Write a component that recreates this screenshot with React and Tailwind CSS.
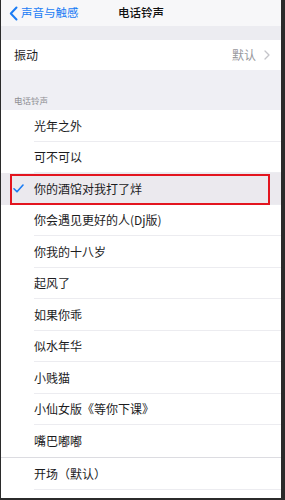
import { useState } from 'react'

const SONGS = [
  '光年之外',
  '可不可以',
  '你的酒馆对我打了烊',
  '你会遇见更好的人(Dj版)',
  '你我的十八岁',
  '起风了',
  '如果你乖',
  '似水年华',
  '小贱猫',
  '小仙女版《等你下课》',
  '嘴巴嘟嘟',
]

const FONT = { fontFamily: '"Noto Sans CJK SC", "Noto Sans", sans-serif' }

function Check() {
  return (
    <svg width="11" height="9" viewBox="0 0 11 9" fill="none">
      <path d="M1 4.8 L4 7.8 L10 1" stroke="#1a7cf5" strokeWidth="1.6" strokeLinecap="round" strokeLinejoin="round" />
    </svg>
  )
}

export default function App() {
  const [selected, setSelected] = useState(2)

  return (
    <div className="w-[285px] h-[500px] overflow-hidden bg-[#2b2b2b] flex" style={FONT}>
      <div className="ml-px w-[280px] h-[498px] bg-[#efeff4] flex flex-col overflow-hidden">

        {/* Nav bar */}
        <div className="relative h-[26px] shrink-0 bg-[#f7f7f9] flex items-center">
          <div className="flex items-center pl-[8px] text-[#1a7cf5]">
            <svg width="9" height="15" viewBox="0 0 9 15" fill="none">
              <path d="M7.5 1.5 L1.8 7.5 L7.5 13.5" stroke="#1a7cf5" strokeWidth="2" strokeLinecap="round" strokeLinejoin="round" />
            </svg>
            <span className="ml-[3px] text-[11.5px] leading-none">声音与触感</span>
          </div>
          <div className="absolute inset-0 flex items-center justify-center pointer-events-none">
            <span className="text-[11.5px] font-medium text-[#111] leading-none">电话铃声</span>
          </div>
        </div>

        <div className="h-[14px] shrink-0 bg-[#ececf1]" />

        {/* Vibration row */}
        <div className="h-[30px] shrink-0 bg-white flex items-center justify-between pl-[13px] pr-[11px]">
          <span className="text-[12px] text-[#1c1c1e]">振动</span>
          <div className="flex items-center gap-[8px]">
            <span className="text-[12px] text-[#98989d]">默认</span>
            <svg width="6" height="10" viewBox="0 0 6 10" fill="none">
              <path d="M1 1 L5 5 L1 9" stroke="#c4c4c9" strokeWidth="1.3" strokeLinecap="round" strokeLinejoin="round" />
            </svg>
          </div>
        </div>

        {/* Section header */}
        <div className="h-[40px] shrink-0 flex items-end pl-[13px] pb-[6px]">
          <span className="text-[8.5px] text-[#8e8e93] leading-none">电话铃声</span>
        </div>

        {/* Ringtone list */}
        <div className="bg-white shrink-0">
          {SONGS.map((song, i) => (
            <button
              key={song}
              onClick={() => setSelected(i)}
              className={`relative w-full h-[31.5px] flex items-center text-left ${
                selected === i ? 'bg-[#ebe9ee]' : 'bg-white'
              }`}
            >
              <span className="w-[33px] shrink-0 flex justify-center pl-[2px]">
                {selected === i && <Check />}
              </span>
              <span className="text-[12px] text-[#1c1c1e] leading-none">{song}</span>
              {i < SONGS.length - 1 && (
                <span className="absolute left-[33px] right-0 bottom-0 h-px bg-[#ececf0]" />
              )}
              {selected === i && (
                <span className="absolute left-[9px] right-[11px] top-[1px] bottom-0 border-2 border-[#e3151f]" />
              )}
            </button>
          ))}
        </div>

        <div className="h-[1.5px] shrink-0 bg-[#dcdce1]" />

        <div className="bg-white shrink-0">
          <div className="relative h-[32px] flex items-center pl-[33px]">
            <span className="text-[12px] text-[#1c1c1e] leading-none">开场（默认）</span>
            <span className="absolute left-[33px] right-0 bottom-0 h-px bg-[#ececf0]" />
          </div>
        </div>
        <div className="flex-1 bg-white" />
      </div>
    </div>
  )
}
